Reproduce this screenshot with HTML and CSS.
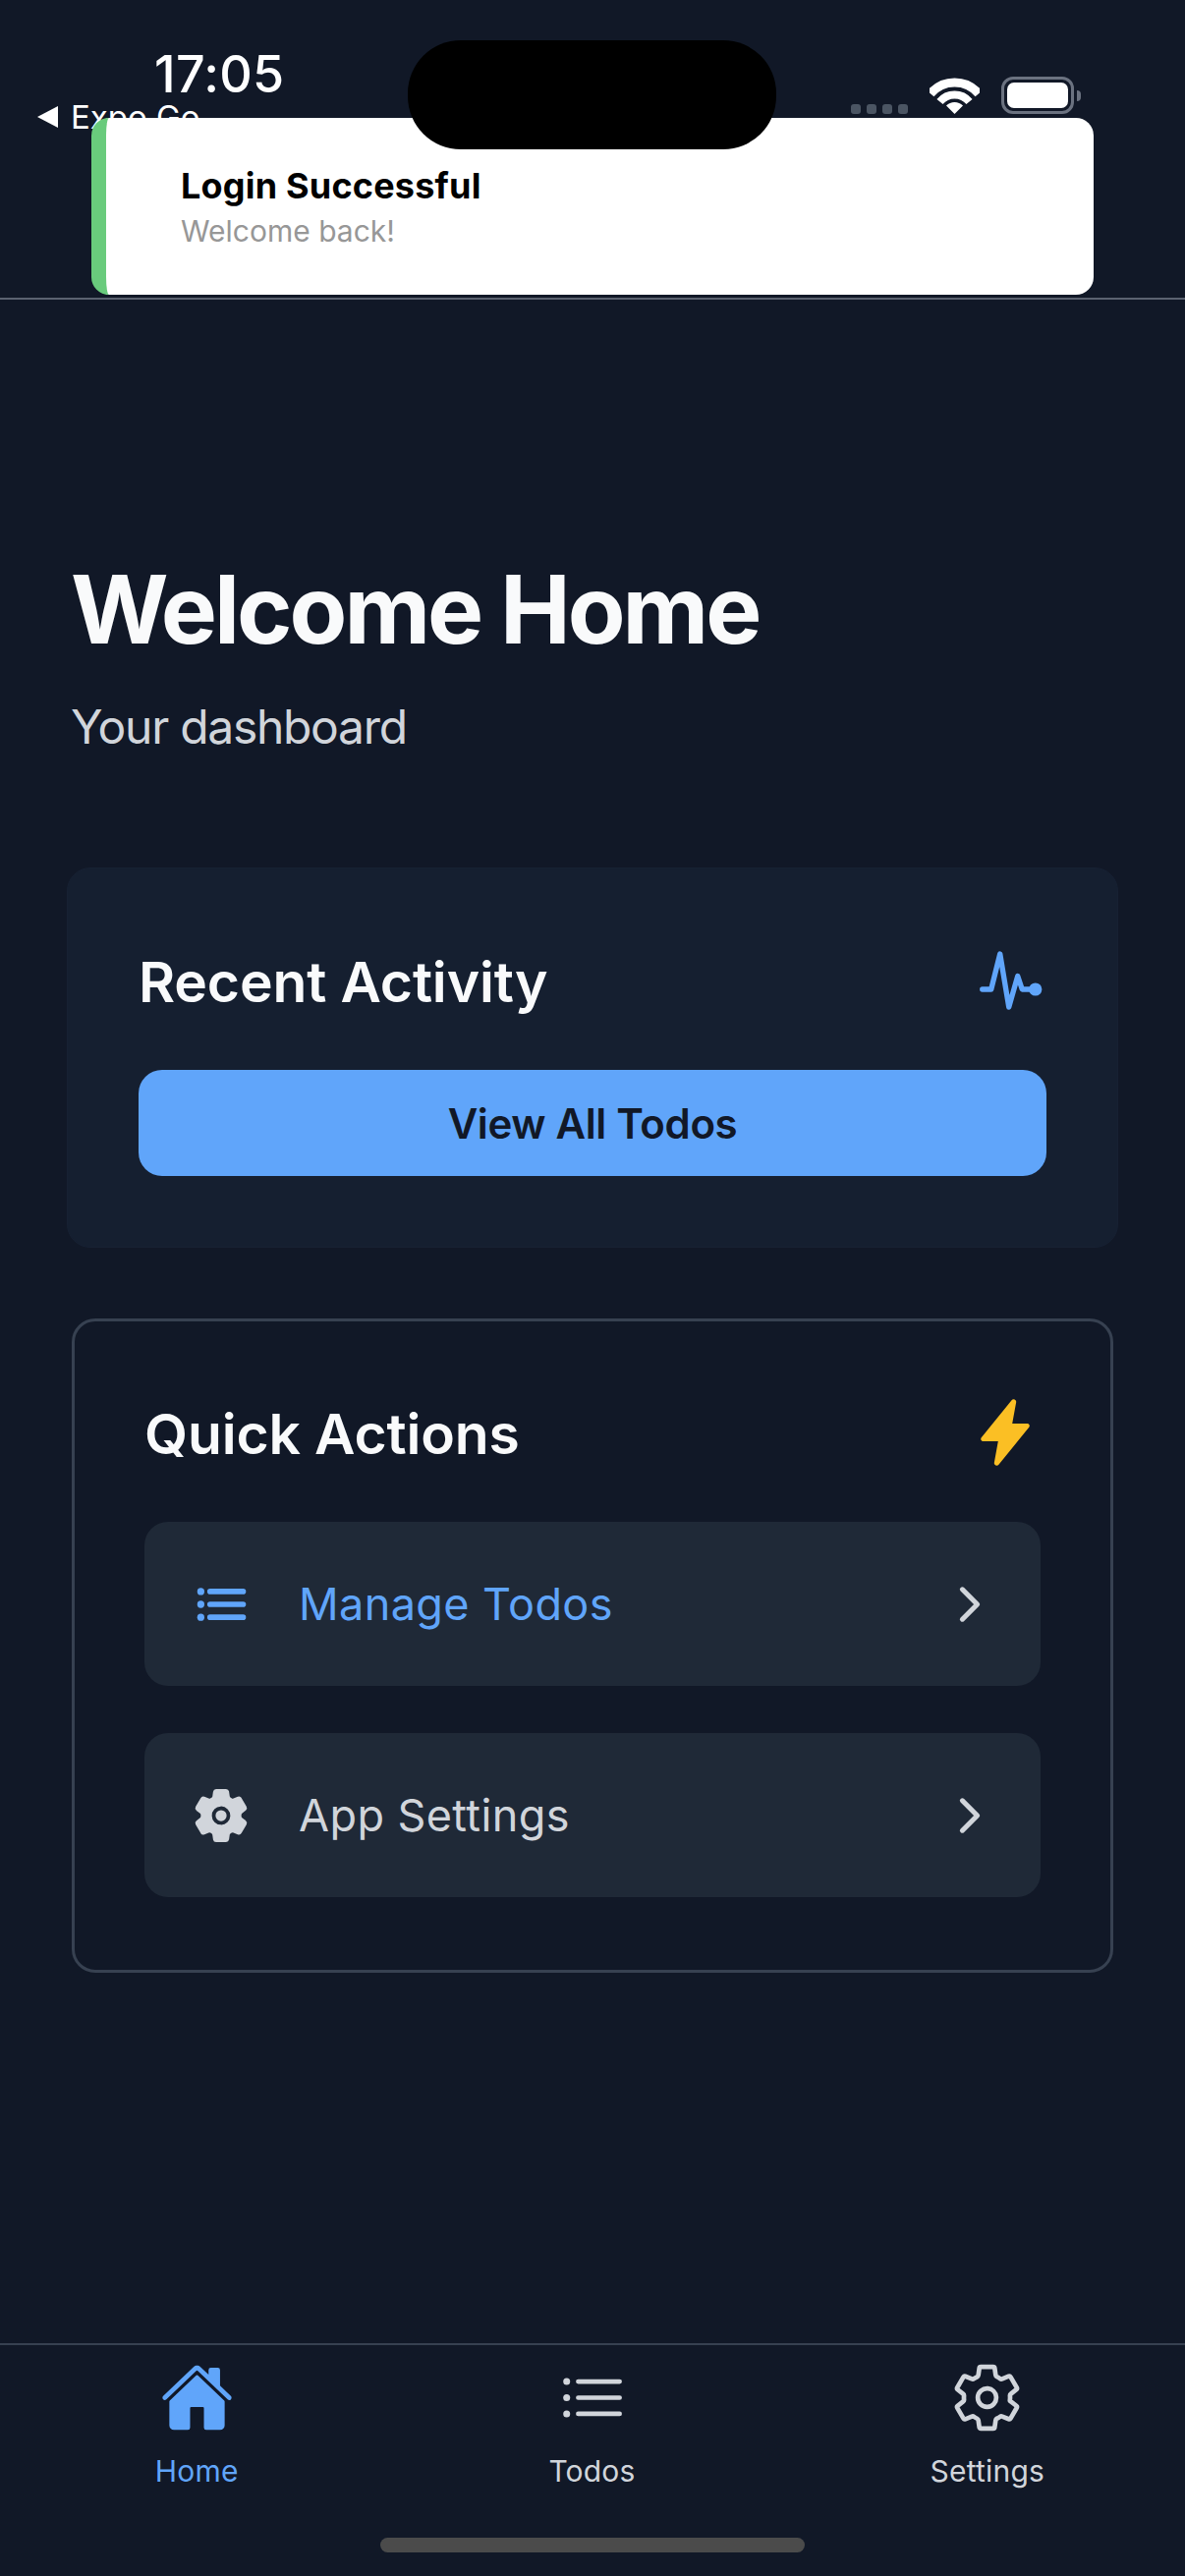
FILE: index.html
```html
<!DOCTYPE html>
<html lang="en">
<head>
    <meta charset="UTF-8">
    <meta name="viewport" content="width=device-width, initial-scale=1.0">
    <title>Welcome Home</title>
    <link rel="stylesheet" href="styles.css">
</head>
<body>
    <div class="island"></div>

    <div class="toast">
        <div class="toast-title">Login Successful</div>
        <div class="toast-text">Welcome back!</div>
    </div>

    <header class="status">
        <div class="status-left">
            <div class="time">17:05</div>
            <div class="back"><span class="back-arrow"></span>Expo Go</div>
        </div>
        <div class="status-right">
            <div class="signal"><span></span><span></span><span></span><span></span></div>
            <svg class="wifi" viewBox="0 0 51 37">
                <path d="M1 16.4A32 32 0 0 1 50 16.4" fill="none" stroke="#fff" stroke-width="9"/>
                <path d="M10.5 24.5A19.5 19.5 0 0 1 40.5 24.5" fill="none" stroke="#fff" stroke-width="8"/>
                <path d="M25.5 37L17 28.5A12 12 0 0 1 34 28.5Z" fill="#fff"/>
            </svg>
            <div class="battery"><span class="battery-level"></span></div>
            <span class="battery-nub"></span>
        </div>
    </header>

    <main class="content">
        <h1 class="title">Welcome Home</h1>
        <p class="subtitle">Your dashboard</p>

        <section class="card card-recent">
            <div class="card-head">
                <h2>Recent Activity</h2>
                <svg class="head-icon" viewBox="0 0 512 512">
                    <path d="M48 320h64l64-256 64 384 64-224 32 96h64" fill="none" stroke="#60a5fa" stroke-linecap="round" stroke-linejoin="round" stroke-width="38"/>
                    <circle cx="432" cy="320" r="47" fill="#60a5fa"/>
                </svg>
            </div>
            <button class="primary-btn">View All Todos</button>
        </section>

        <section class="card card-actions">
            <div class="card-head">
                <h2>Quick Actions</h2>
                <svg class="head-icon" viewBox="0 0 512 512">
                    <path d="M194.82 496a18.36 18.36 0 01-18.1-21.53v-.11L204.83 320H96a16 16 0 01-12.44-26.06L302.73 23a18.45 18.45 0 0132.8 14.09c0 .08 0 .08-.07.17L307.19 192H416a16 16 0 0112.44 26.06L209.24 489a18.45 18.45 0 01-14.42 7z" fill="#fbbf24"/>
                </svg>
            </div>
            <div class="action action-blue">
                <svg class="action-icon" viewBox="0 0 512 512">
                    <path d="M160 144h288M160 256h288M160 368h288" fill="none" stroke="currentColor" stroke-linecap="round" stroke-linejoin="round" stroke-width="48"/>
                    <circle cx="80" cy="144" r="31" fill="currentColor"/>
                    <circle cx="80" cy="256" r="31" fill="currentColor"/>
                    <circle cx="80" cy="368" r="31" fill="currentColor"/>
                </svg>
                <span class="action-label">Manage Todos</span>
                <svg class="chevron" viewBox="0 0 512 512"><path d="M184 112l144 144-144 144" fill="none" stroke="#d1d5db" stroke-linecap="round" stroke-linejoin="round" stroke-width="48"/></svg>
            </div>
            <div class="action">
                <svg class="action-icon" viewBox="0 0 512 512">
                    <circle cx="256" cy="256" r="48" fill="currentColor"/>
                    <path d="M470.39 300l-.47-.38-31.56-24.75a16.11 16.11 0 01-6.1-13.33v-11.56a16 16 0 016.11-13.22L469.92 212l.47-.38a26.68 26.68 0 005.9-34.06l-42.71-73.9a1.59 1.59 0 01-.13-.22A26.86 26.86 0 00401 92.14l-.35.13-37.1 14.93a15.94 15.94 0 01-14.47-1.29q-4.92-3.1-10-5.86a15.94 15.94 0 01-8.19-11.82l-5.59-39.59-.12-.72A27.22 27.22 0 00298.76 26h-85.52a26.92 26.92 0 00-26.45 22.39l-.09.56-5.57 39.67a16 16 0 01-8.13 11.82 175.21 175.21 0 00-10 5.82 15.92 15.92 0 01-14.43 1.27l-37.13-15-.35-.14a26.87 26.87 0 00-32.48 11.34l-.13.22-42.77 73.95a26.71 26.71 0 005.9 34.1l.47.38 31.56 24.75a16.11 16.11 0 016.1 13.33v11.56a16 16 0 01-6.11 13.22L42.08 300l-.47.38a26.68 26.68 0 00-5.9 34.06l42.71 73.9a1.59 1.59 0 01.13.22 26.86 26.86 0 0032.45 11.3l.35-.13 37.07-14.93a15.94 15.94 0 0114.47 1.29q4.92 3.11 10 5.86a15.94 15.94 0 018.19 11.82l5.56 39.59.12.72A27.22 27.22 0 00213.24 486h85.52a26.92 26.92 0 0026.45-22.39l.09-.56 5.57-39.67a16 16 0 018.18-11.82c3.42-1.84 6.76-3.79 10-5.82a15.92 15.92 0 0114.43-1.27l37.13 14.95.35.14a26.88 26.88 0 0032.48-11.34 2.53 2.53 0 01.13-.22l42.71-73.89a26.7 26.7 0 00-5.89-34.11zm-134.48-40.24a80 80 0 11-83.66-83.67 80.21 80.21 0 0183.66 83.67z" fill="currentColor"/>
                </svg>
                <span class="action-label">App Settings</span>
                <svg class="chevron" viewBox="0 0 512 512"><path d="M184 112l144 144-144 144" fill="none" stroke="#d1d5db" stroke-linecap="round" stroke-linejoin="round" stroke-width="48"/></svg>
            </div>
        </section>
    </main>

    <nav class="tabbar">
        <div class="tabs">
            <div class="tab tab-active">
                <svg class="tab-icon" viewBox="0 0 512 512">
                    <path d="M261.56 101.28a8 8 0 00-11.06 0L66.4 277.15a8 8 0 00-2.47 5.79L63.9 448a32 32 0 0032 32H192a16 16 0 0016-16V328a8 8 0 018-8h80a8 8 0 018 8v136a16 16 0 0016 16h96.06a32 32 0 0032-32V282.94a8 8 0 00-2.47-5.79z" fill="currentColor"/>
                    <path d="M490.91 244.15l-74.8-71.56V64a16 16 0 00-16-16h-48a16 16 0 00-16 16v32l-57.92-55.38C272.77 35.14 264.71 32 256 32c-8.68 0-16.72 3.14-22.14 8.63l-212.7 203.5c-6.22 6-7 15.87-1.34 22.37A16 16 0 0043 267.56L250.5 69.28a8 8 0 0111.06 0l207.52 198.28a16 16 0 0022.59-.44c6.14-6.36 5.63-16.86-.76-22.97z" fill="currentColor"/>
                </svg>
                <span>Home</span>
            </div>
            <div class="tab">
                <svg class="tab-icon" viewBox="0 0 512 512">
                    <path d="M160 144h288M160 256h288M160 368h288" fill="none" stroke="currentColor" stroke-linecap="round" stroke-linejoin="round" stroke-width="32"/>
                    <circle cx="80" cy="144" r="24" fill="currentColor"/>
                    <circle cx="80" cy="256" r="24" fill="currentColor"/>
                    <circle cx="80" cy="368" r="24" fill="currentColor"/>
                </svg>
                <span>Todos</span>
            </div>
            <div class="tab">
                <svg class="tab-icon" viewBox="0 0 512 512">
                    <path d="M262.29 192.31a64 64 0 1057.4 57.4 64.13 64.13 0 00-57.4-57.4zM416.39 256a154.34 154.34 0 01-1.53 20.79l45.21 35.46a10.81 10.81 0 012.45 13.75l-42.77 74a10.81 10.81 0 01-13.14 4.59l-44.9-18.08a16.11 16.11 0 00-15.17 1.75A164.48 164.48 0 01325 400.8a15.94 15.94 0 00-8.82 12.14l-6.73 47.89a11.08 11.08 0 01-10.68 9.17h-85.54a11.11 11.11 0 01-10.69-8.87l-6.72-47.82a16.07 16.07 0 00-9-12.22 155.3 155.3 0 01-21.46-12.57 16 16 0 00-15.11-1.71l-44.89 18.07a10.81 10.81 0 01-13.14-4.58l-42.77-74a10.8 10.8 0 012.45-13.75l38.21-30a16.05 16.05 0 006-14.08c-.36-4.17-.58-8.33-.58-12.5s.21-8.27.58-12.35a16 16 0 00-6.07-13.94l-38.19-30A10.81 10.81 0 0149.48 186l42.77-74a10.81 10.81 0 0113.14-4.59l44.9 18.08a16.11 16.11 0 0015.17-1.75A164.48 164.48 0 01187 111.2a15.94 15.94 0 008.82-12.14l6.73-47.89A11.08 11.08 0 01213.23 42h85.54a11.11 11.11 0 0110.69 8.87l6.72 47.82a16.07 16.07 0 009 12.22 155.3 155.3 0 0121.46 12.57 16 16 0 0015.11 1.71l44.89-18.07a10.81 10.81 0 0113.14 4.58l42.77 74a10.8 10.8 0 01-2.45 13.75l-38.21 30a16.05 16.05 0 00-6.05 14.08c.33 4.14.55 8.3.55 12.47z" fill="none" stroke="currentColor" stroke-linecap="round" stroke-linejoin="round" stroke-width="32"/>
                </svg>
                <span>Settings</span>
            </div>
        </div>
        <div class="home-bar"></div>
    </nav>
</body>
</html>
```

FILE: styles.css
```css
* { box-sizing: border-box; }

body {
    margin: 0;
    height: 2622px;
    position: relative;
    overflow: hidden;
    display: flex;
    flex-direction: column;
    background: #111827;
    color: #f9fafb;
    font-family: Inter, "Noto Sans", sans-serif;
}

/* things lying over the header */
.island {
    position: absolute;
    left: 415px;
    top: 41px;
    width: 375px;
    height: 111px;
    border-radius: 54px;
    background: #000;
    z-index: 3;
}

.toast {
    position: absolute;
    left: 93px;
    top: 120px;
    width: 1020px;
    height: 180px;
    padding: 47px 0 0 76px;
    background: #fff;
    border-left: 15px solid #69cb7c;
    border-radius: 18px;
    z-index: 2;
}

.toast-title {
    font-size: 36px;
    line-height: 44px;
    font-weight: 700;
    letter-spacing: 0.2px;
    color: #000;
}

.toast-text {
    margin-top: 6px;
    font-size: 30px;
    line-height: 36px;
    color: #979797;
}

/* status bar */
.status {
    height: 305px;
    flex-shrink: 0;
    display: flex;
    justify-content: space-between;
    align-items: flex-start;
    padding: 47px 106px 0 38px;
    border-bottom: 2px solid #5b6270;
}

.time {
    margin-left: 119px;
    font-size: 52px;
    line-height: 58px;
    font-weight: 500;
    letter-spacing: 0.3px;
    color: #fff;
}

.back {
    display: flex;
    align-items: center;
    gap: 13px;
    margin-top: -6px;
    font-size: 33px;
    line-height: 40px;
    color: #fff;
}

.back-arrow {
    width: 0;
    height: 0;
    border-top: 11px solid transparent;
    border-bottom: 11px solid transparent;
    border-right: 21px solid #fff;
}

.status-right {
    display: flex;
    align-items: flex-start;
    margin-top: 31px;
}

.signal {
    display: flex;
    gap: 6px;
    margin: 28px 22px 0 0;
}

.signal span {
    width: 10px;
    height: 10px;
    border-radius: 3px;
    background: #4b5563;
}

.wifi {
    width: 51px;
    height: 37px;
    margin-top: 1px;
}

.battery {
    width: 74px;
    height: 38px;
    margin-left: 22px;
    padding: 3px;
    border: 3px solid #6b7280;
    border-radius: 12px;
}

.battery-level {
    display: block;
    height: 100%;
    background: #fff;
    border-radius: 7px;
}

.battery-nub {
    width: 4px;
    height: 11px;
    margin: 14px 0 0 3px;
    background: #6b7280;
    border-radius: 0 4px 4px 0;
}

/* page */
.content {
    flex: 1;
    padding: 257px 73px 0;
}

.title {
    margin: 0 0 0 -1px;
    font-size: 96px;
    line-height: 116px;
    font-weight: 700;
    letter-spacing: -3px;
}

.subtitle {
    margin: 33px 0 0 -1px;
    font-size: 48px;
    line-height: 58px;
    letter-spacing: -1.3px;
    color: #d1d5db;
}

.card {
    border-radius: 24px;
}

.card-recent {
    margin: 114px -5px 0;
    padding: 72px;
    background: #151f30;
    border: 1px solid #172133;
}

.card-actions {
    margin-top: 72px;
    padding: 71px 71px 74px;
    border: 3px solid #374151;
}

.card-head {
    display: flex;
    justify-content: space-between;
    align-items: center;
    height: 84px;
    margin-bottom: 49px;
}

.card-head h2 {
    margin: 0;
    padding-top: 2px;
    font-size: 57px;
    font-weight: 600;
    letter-spacing: -0.15px;
    color: #f9fafb;
}

.head-icon {
    width: 72px;
    height: 72px;
}

.primary-btn {
    display: block;
    width: 100%;
    height: 108px;
    border: 0;
    border-radius: 24px;
    background: #60a5fa;
    color: #111827;
    font-family: inherit;
    font-size: 42px;
    font-weight: 600;
    letter-spacing: -0.35px;
}

.action {
    display: flex;
    align-items: center;
    height: 167px;
    padding: 0 45px 0 48px;
    margin-bottom: 48px;
    border-radius: 24px;
    background: #1f2937;
    color: #d1d5db;
}

.action:last-child { margin-bottom: 0; }

.action-blue { color: #60a5fa; }

.action-icon {
    width: 60px;
    height: 60px;
}

.action-label {
    flex: 1;
    margin-left: 49px;
    font-size: 45px;
    letter-spacing: 0.4px;
}

.chevron {
    width: 54px;
    height: 54px;
}

/* tab bar */
.tabbar {
    height: 237px;
    flex-shrink: 0;
    border-top: 2px solid #374151;
    color: #d1d5db;
}

.tabs {
    display: grid;
    grid-template-columns: repeat(3, 1fr);
    margin-left: -1px;
    padding-top: 16px;
}

.tab {
    display: flex;
    flex-direction: column;
    align-items: center;
    font-size: 30px;
    line-height: 36px;
    letter-spacing: 0.2px;
}

.tab-active { color: #60a5fa; }

.tab-icon {
    width: 75px;
    height: 75px;
    margin-bottom: 19px;
}

.home-bar {
    width: 432px;
    height: 15px;
    margin: 50px auto 0;
    border-radius: 8px;
    background: #4b4b4b;
}
```
